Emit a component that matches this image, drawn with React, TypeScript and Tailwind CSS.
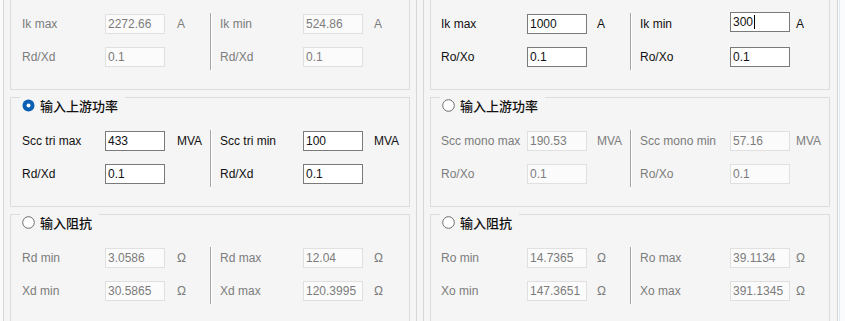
type Row = { label: string; value: string; unit: string; caret?: boolean; lift?: boolean };

type Col = "L" | "R";

type Box = {
  title?: string;
  checked?: boolean;
  enabled: boolean;
  left: Row[];
  right: Row[];
};

const sizes = {
  L: {
    pad: "pl-[11px]",
    half1: "w-[188px]",
    label1: "w-[83px]",
    unit1: "ml-[12px]",
    label2: "w-[83px]",
    unit2: "ml-[11px]",
  },
  R: {
    pad: "pl-[10px]",
    half1: "w-[189px]",
    label1: "w-[86px]",
    unit1: "ml-[10px]",
    label2: "w-[90px]",
    unit2: "ml-[6px]",
  },
};

const leftBoxes: Box[] = [
  {
    enabled: false,
    left: [
      { label: "Ik max", value: "2272.66", unit: "A" },
      { label: "Rd/Xd", value: "0.1", unit: "" },
    ],
    right: [
      { label: "Ik min", value: "524.86", unit: "A" },
      { label: "Rd/Xd", value: "0.1", unit: "" },
    ],
  },
  {
    title: "输入上游功率",
    checked: true,
    enabled: true,
    left: [
      { label: "Scc tri max", value: "433", unit: "MVA" },
      { label: "Rd/Xd", value: "0.1", unit: "" },
    ],
    right: [
      { label: "Scc tri min", value: "100", unit: "MVA" },
      { label: "Rd/Xd", value: "0.1", unit: "" },
    ],
  },
  {
    title: "输入阻抗",
    enabled: false,
    left: [
      { label: "Rd min", value: "3.0586", unit: "Ω" },
      { label: "Xd min", value: "30.5865", unit: "Ω" },
    ],
    right: [
      { label: "Rd max", value: "12.04", unit: "Ω" },
      { label: "Xd max", value: "120.3995", unit: "Ω" },
    ],
  },
];

const rightBoxes: Box[] = [
  {
    enabled: true,
    left: [
      { label: "Ik max", value: "1000", unit: "A" },
      { label: "Ro/Xo", value: "0.1", unit: "" },
    ],
    right: [
      { label: "Ik min", value: "300", unit: "A", caret: true, lift: true },
      { label: "Ro/Xo", value: "0.1", unit: "" },
    ],
  },
  {
    title: "输入上游功率",
    enabled: false,
    left: [
      { label: "Scc mono max", value: "190.53", unit: "MVA" },
      { label: "Ro/Xo", value: "0.1", unit: "" },
    ],
    right: [
      { label: "Scc mono min", value: "57.16", unit: "MVA" },
      { label: "Ro/Xo", value: "0.1", unit: "" },
    ],
  },
  {
    title: "输入阻抗",
    enabled: false,
    left: [
      { label: "Ro min", value: "14.7365", unit: "Ω" },
      { label: "Xo min", value: "147.3651", unit: "Ω" },
    ],
    right: [
      { label: "Ro max", value: "39.1134", unit: "Ω" },
      { label: "Xo max", value: "391.1345", unit: "Ω" },
    ],
  },
];

function Radio({ checked }: { checked?: boolean }) {
  return (
    <svg width="13" height="13" viewBox="0 0 13 13" className="shrink-0">
      {checked ? (
        <>
          <circle cx="6.5" cy="6.5" r="6" fill="#0a5fb4" />
          <circle cx="6.5" cy="6.5" r="2" fill="#ffffff" />
        </>
      ) : (
        <circle cx="6.5" cy="6.5" r="5.8" fill="#ffffff" stroke="#6b6b6b" strokeWidth="1" />
      )}
    </svg>
  );
}

function Field({ row, enabled, labelW, unitMl }: { row: Row; enabled: boolean; labelW: string; unitMl: string }) {
  const text = enabled ? "text-[#111]" : "text-[#7c7c7c]";
  return (
    <div className={`flex h-[20px] items-center ${text}`}>
      <span className={`${labelW} whitespace-nowrap`}>{row.label}</span>
      <div
        className={`flex h-[20px] w-[60px] items-center border px-[2px] ${row.lift ? "-mt-[4px]" : ""} ${
          enabled ? "border-[#7a7a7a] bg-white" : "border-[#e0e0e0] bg-[#fbfbfb]"
        }`}
      >
        <span>{row.value}</span>
        {row.caret && <span className="ml-px h-[14px] w-px bg-black" />}
      </div>
      {row.unit && <span className={unitMl}>{row.unit}</span>}
    </div>
  );
}

function GroupBox({ box, col, first }: { box: Box; col: Col; first?: boolean }) {
  const s = sizes[col];
  return (
    <div
      className={`relative border border-[#dcdcdc] ${s.pad} ${
        first ? "border-t-0 pt-[14px] pb-[19px]" : "mt-[7px] pt-[33px] pb-[19px]"
      }`}
    >
      {box.title && (
        <div className="absolute -top-[1px] left-[9px] flex h-[17px] items-center gap-[5px] bg-[#f5f5f5] pl-[2px] pr-[7px]">
          <Radio checked={box.checked} />
          <span className="font-['Noto_Sans_CJK_SC',sans-serif] text-[13px] font-medium leading-none text-[#111]">
            {box.title}
          </span>
        </div>
      )}
      <div className="flex">
        <div className={`${s.half1} flex flex-col gap-[13px]`}>
          {box.left.map((r) => (
            <Field key={r.label + r.value} row={r} enabled={box.enabled} labelW={s.label1} unitMl={s.unit1} />
          ))}
        </div>
        <div className="-mt-px h-[57px] w-[2px] border-r border-white bg-[#a6a6a6]" />
        <div className="ml-[8px] flex flex-col gap-[13px]">
          {box.right.map((r) => (
            <Field key={r.label + r.value} row={r} enabled={box.enabled} labelW={s.label2} unitMl={s.unit2} />
          ))}
        </div>
      </div>
    </div>
  );
}

export default function App() {
  return (
    <div className="flex h-[321px] w-[845px] overflow-hidden bg-[#f5f5f5] font-['Liberation_Sans',Arial,sans-serif] text-[12px]">
      <div className="w-[3px] bg-[#fafafa]" />
      <div className="w-[414px] border-x border-[#d6d6d6] px-[6px]">
        {leftBoxes.map((b, i) => (
          <GroupBox key={i} box={b} col="L" first={i === 0} />
        ))}
      </div>
      <div className="w-[6px]" />
      <div className="w-[415px] border-x border-[#d6d6d6] pl-[6px] pr-[7px]">
        {rightBoxes.map((b, i) => (
          <GroupBox key={i} box={b} col="R" first={i === 0} />
        ))}
      </div>
      <div className="flex-1 bg-[#fafbfd] pl-px">
        <div className="h-full w-px bg-[#e2e9f2]" />
      </div>
    </div>
  );
}
